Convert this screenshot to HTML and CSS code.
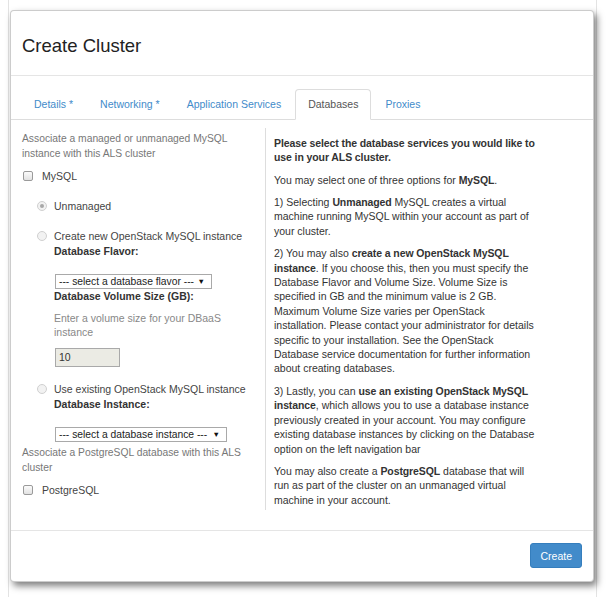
FILE: index.html
```html
<!DOCTYPE html>
<html>
<head>
<meta charset="utf-8">
<title>Create Cluster</title>
<link rel="stylesheet" href="styles.css">
</head>
<body>
<div class="page">
  <div class="modal">
    <div class="modal-header">
      <h3 class="modal-title">Create Cluster</h3>
    </div>
    <ul class="nav-tabs">
      <li class="tab"><a>Details *</a></li>
      <li class="tab"><a>Networking *</a></li>
      <li class="tab"><a>Application Services</a></li>
      <li class="tab active"><a>Databases</a></li>
      <li class="tab"><a>Proxies</a></li>
    </ul>
    <div class="tab-content">
      <div class="col-left">
        <p class="help">Associate a managed or unmanaged MySQL instance with this ALS cluster</p>
        <div class="check"><span class="box"></span><span class="check-label">MySQL</span></div>
        <div class="radios">
          <div class="radio"><span class="circle checked"></span><span>Unmanaged</span></div>
          <div class="radio"><span class="circle"></span><span>Create new OpenStack MySQL instance</span></div>
          <div class="sub">
            <div class="field-label">Database Flavor:</div>
            <div class="select select-flavor"><span>--- select a database flavor ---</span><span class="arrow">&#9660;</span></div>
            <div class="field-label">Database Volume Size (GB):</div>
            <p class="sub-help">Enter a volume size for your DBaaS instance</p>
            <div class="input">10</div>
          </div>
          <div class="radio radio-existing"><span class="circle"></span><span>Use existing OpenStack MySQL instance</span></div>
          <div class="sub">
            <div class="field-label">Database Instance:</div>
            <div class="select select-instance"><span>--- select a database instance ---</span><span class="arrow">&#9660;</span></div>
          </div>
        </div>
        <p class="help help-pg">Associate a PostgreSQL database with this ALS cluster</p>
        <div class="check"><span class="box"></span><span class="check-label">PostgreSQL</span></div>
      </div>
      <div class="col-right">
        <p><b>Please select the database services you would like to use in your ALS cluster.</b></p>
        <p>You may select one of three options for <b>MySQL</b>.</p>
        <p>1) Selecting <b>Unmanaged</b> MySQL creates a virtual machine running MySQL within your account as part of your cluster.</p>
        <p>2) You may also <b>create a new OpenStack MySQL instance</b>. If you choose this, then you must specify the Database Flavor and Volume Size. Volume Size is specified in GB and the minimum value is 2 GB. Maximum Volume Size varies per OpenStack installation. Please contact your administrator for details specific to your installation. See the OpenStack Database service documentation for further information about creating databases.</p>
        <p>3) Lastly, you can <b>use an existing OpenStack MySQL instance</b>, which allows you to use a database instance previously created in your account. You may configure existing database instances by clicking on the Database option on the left navigation bar</p>
        <p>You may also create a <b>PostgreSQL</b> database that will run as part of the cluster on an unmanaged virtual machine in your account.</p>
      </div>
    </div>
    <div class="modal-footer">
      <button class="btn-primary" type="button">Create</button>
    </div>
  </div>
</div>
</body>
</html>
```
FILE: styles.css
```css
* { box-sizing: border-box; }

body {
  margin: 0;
  background: #fff;
  font-family: "Liberation Sans", Arial, sans-serif;
  font-size: 10.5px;
  color: #333;
}

.page {
  margin: 0 11px 0 8px;
  height: 597px;
  border-left: 1px solid #e3e3e3;
  border-right: 1px solid #e3e3e3;
  padding: 10px 2px 0 1px;
}

.modal {
  height: 572px;
  background: #fff;
  border: 1px solid rgba(0, 0, 0, 0.2);
  border-radius: 4px;
  box-shadow: 3px 4px 7px rgba(0, 0, 0, 0.5);
  display: flex;
  flex-direction: column;
}

.modal-header {
  padding: 24px 11px 18px;
  border-bottom: 1px solid #e5e5e5;
}

.modal-title {
  margin: 0;
  font-size: 18.5px;
  line-height: 22px;
  font-weight: normal;
  color: #222;
}

.nav-tabs {
  list-style: none;
  margin: 0;
  padding: 13px 0 0 10px;
  display: flex;
  border-bottom: 1px solid #ddd;
}

.tab {
  margin-bottom: -1px;
  margin-right: 1px;
}

.tab a {
  display: block;
  padding: 0 12px;
  line-height: 29px;
  border: 1px solid transparent;
  border-radius: 4px 4px 0 0;
  color: #428bca;
}

.tab.active a {
  color: #555;
  background: #fff;
  border-color: #ddd;
  border-bottom-color: transparent;
}

.tab-content {
  display: flex;
  margin: 8px 0 20px;
}

.col-left {
  width: 254px;
  padding: 2.5px 12px 12.5px 11px;
}

.col-right {
  width: 278px;
  border-left: 1px solid #ddd;
  padding: 7.8px 0 3px 8px;
}

.col-right p {
  width: 264px;
  margin: 0 0 8px;
  line-height: 14.4px;
}

.col-right b { letter-spacing: -0.1px; }

.col-right p:last-child { margin-bottom: 0; }

.help {
  margin: 0;
  font-size: 10.3px;
  line-height: 15px;
  color: #777;
}

.help-pg { margin-top: 2.5px; }

.check {
  display: flex;
  align-items: center;
  height: 15px;
  margin-top: 8px;
  color: #444;
}

.box {
  width: 10px;
  height: 10px;
  margin: 0 9px 0 1px;
  border: 1px solid #9a9a9a;
  border-radius: 2px;
  background: linear-gradient(#fbfbfb, #e2e2e2);
}

.radios { padding-left: 15px; }

.radio {
  display: flex;
  align-items: center;
  height: 15px;
  margin-top: 15px;
  color: #444;
}

.radio-existing { margin-top: 14.5px; }

.circle {
  width: 10px;
  height: 10px;
  margin-right: 7px;
  border: 1px solid #d0d0d0;
  border-radius: 50%;
  background: #f2f2f2;
  display: flex;
  align-items: center;
  justify-content: center;
}

.circle.checked::after {
  content: "";
  width: 4px;
  height: 4px;
  border-radius: 50%;
  background: #a8a8a8;
}

.sub { padding-left: 17px; }

.field-label {
  line-height: 15px;
  font-weight: bold;
  color: #333;
}

.select {
  display: flex;
  align-items: center;
  justify-content: space-between;
  height: 15px;
  margin: 15.5px 0 0 1px;
  padding: 0 6px 0 3px;
  border: 1px solid #a9a9a9;
  background: #fff;
  color: #222;
  font-size: 10.3px;
}

.select-flavor { width: 157px; }
.select-instance { width: 172px; }

.arrow {
  font-size: 7.5px;
  color: #111;
}

.sub-help {
  margin: 7px 0 0;
  line-height: 14px;
  color: #888;
}

.input {
  width: 65px;
  height: 19px;
  margin: 9px 0 0 1px;
  padding-left: 3px;
  line-height: 17px;
  border: 1px solid #a9a9a9;
  background: #ebebe4;
  color: #333;
}

.modal-footer {
  flex: 1;
  border-top: 1px solid #e5e5e5;
  padding: 12px 11px 0;
  display: flex;
  justify-content: flex-end;
  align-items: flex-start;
}

.btn-primary {
  height: 25px;
  padding: 0 9px;
  font-family: "Liberation Sans", Arial, sans-serif;
  font-size: 10.5px;
  color: #fff;
  background: #428bca;
  border: 1px solid #357ebd;
  border-radius: 3px;
}
```
